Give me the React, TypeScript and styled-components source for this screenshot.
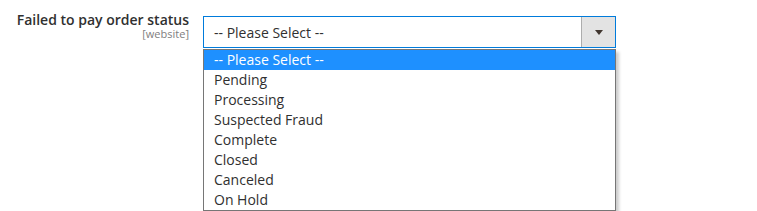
import React from 'react';
import styled, { createGlobalStyle } from 'styled-components';

const GlobalStyle = createGlobalStyle`
  html, body {
    margin: 0;
    padding: 0;
    background: #ffffff;
    font-family: 'Open Sans', 'Noto Sans', sans-serif;
  }
`;

const Page = styled.div`
  width: 757px;
  height: 211px;
  overflow: hidden;
`;

const FieldRow = styled.div`
  display: flex;
  align-items: flex-start;
  padding-top: 16px;
`;

const LabelColumn = styled.div`
  width: 189px;
  display: flex;
  flex-direction: column;
  align-items: flex-end;
  margin-top: -4px;
`;

const LabelText = styled.span`
  font-size: 14px;
  font-weight: 600;
  color: #303030;
  line-height: 16px;
`;

const Scope = styled.span`
  font-size: 11px;
  color: #808080;
  line-height: 12px;
`;

const Control = styled.div`
  position: relative;
  margin-left: 14px;
  width: 413px;
`;

const SelectBox = styled.div`
  box-sizing: border-box;
  height: 32px;
  border: 1px solid #007bdb;
  display: flex;
  align-items: stretch;
  background: #ffffff;
`;

const SelectValue = styled.div`
  flex: 1;
  display: flex;
  align-items: center;
  padding-left: 10px;
  font-size: 14px;
  color: #303030;
`;

const ArrowButton = styled.div`
  width: 33px;
  border-left: 1px solid #adadad;
  background: #e3e3e3;
  display: flex;
  align-items: center;
  justify-content: center;
`;

const Arrow = styled.span`
  width: 0;
  height: 0;
  border-left: 4px solid transparent;
  border-right: 4px solid transparent;
  border-top: 5px solid #41362f;
  margin-top: 1px;
`;

const Listbox = styled.ul`
  position: absolute;
  top: 33px;
  left: 0;
  box-sizing: border-box;
  width: 413px;
  margin: 0;
  padding: 0;
  list-style: none;
  border: 1px solid #767676;
  background: #ffffff;
  box-shadow: 3px 3px 3px rgba(0, 0, 0, 0.2);
`;

const Option = styled.li<{ $selected?: boolean }>`
  height: 20px;
  line-height: 20px;
  padding-left: 10px;
  font-size: 14px;
  color: ${(p) => (p.$selected ? '#ffffff' : '#303030')};
  background: ${(p) => (p.$selected ? '#1e90ff' : 'transparent')};
`;

const options = [
  '-- Please Select --',
  'Pending',
  'Processing',
  'Suspected Fraud',
  'Complete',
  'Closed',
  'Canceled',
  'On Hold',
];

const App: React.FC = () => {
  return (
    <Page>
      <GlobalStyle />
      <FieldRow>
        <LabelColumn>
          <LabelText>Failed to pay order status</LabelText>
          <Scope>[website]</Scope>
        </LabelColumn>
        <Control>
          <SelectBox>
            <SelectValue>-- Please Select --</SelectValue>
            <ArrowButton>
              <Arrow />
            </ArrowButton>
          </SelectBox>
          <Listbox>
            {options.map((o, i) => (
              <Option key={o} $selected={i === 0}>
                {o}
              </Option>
            ))}
          </Listbox>
        </Control>
      </FieldRow>
    </Page>
  );
};

export default App;
